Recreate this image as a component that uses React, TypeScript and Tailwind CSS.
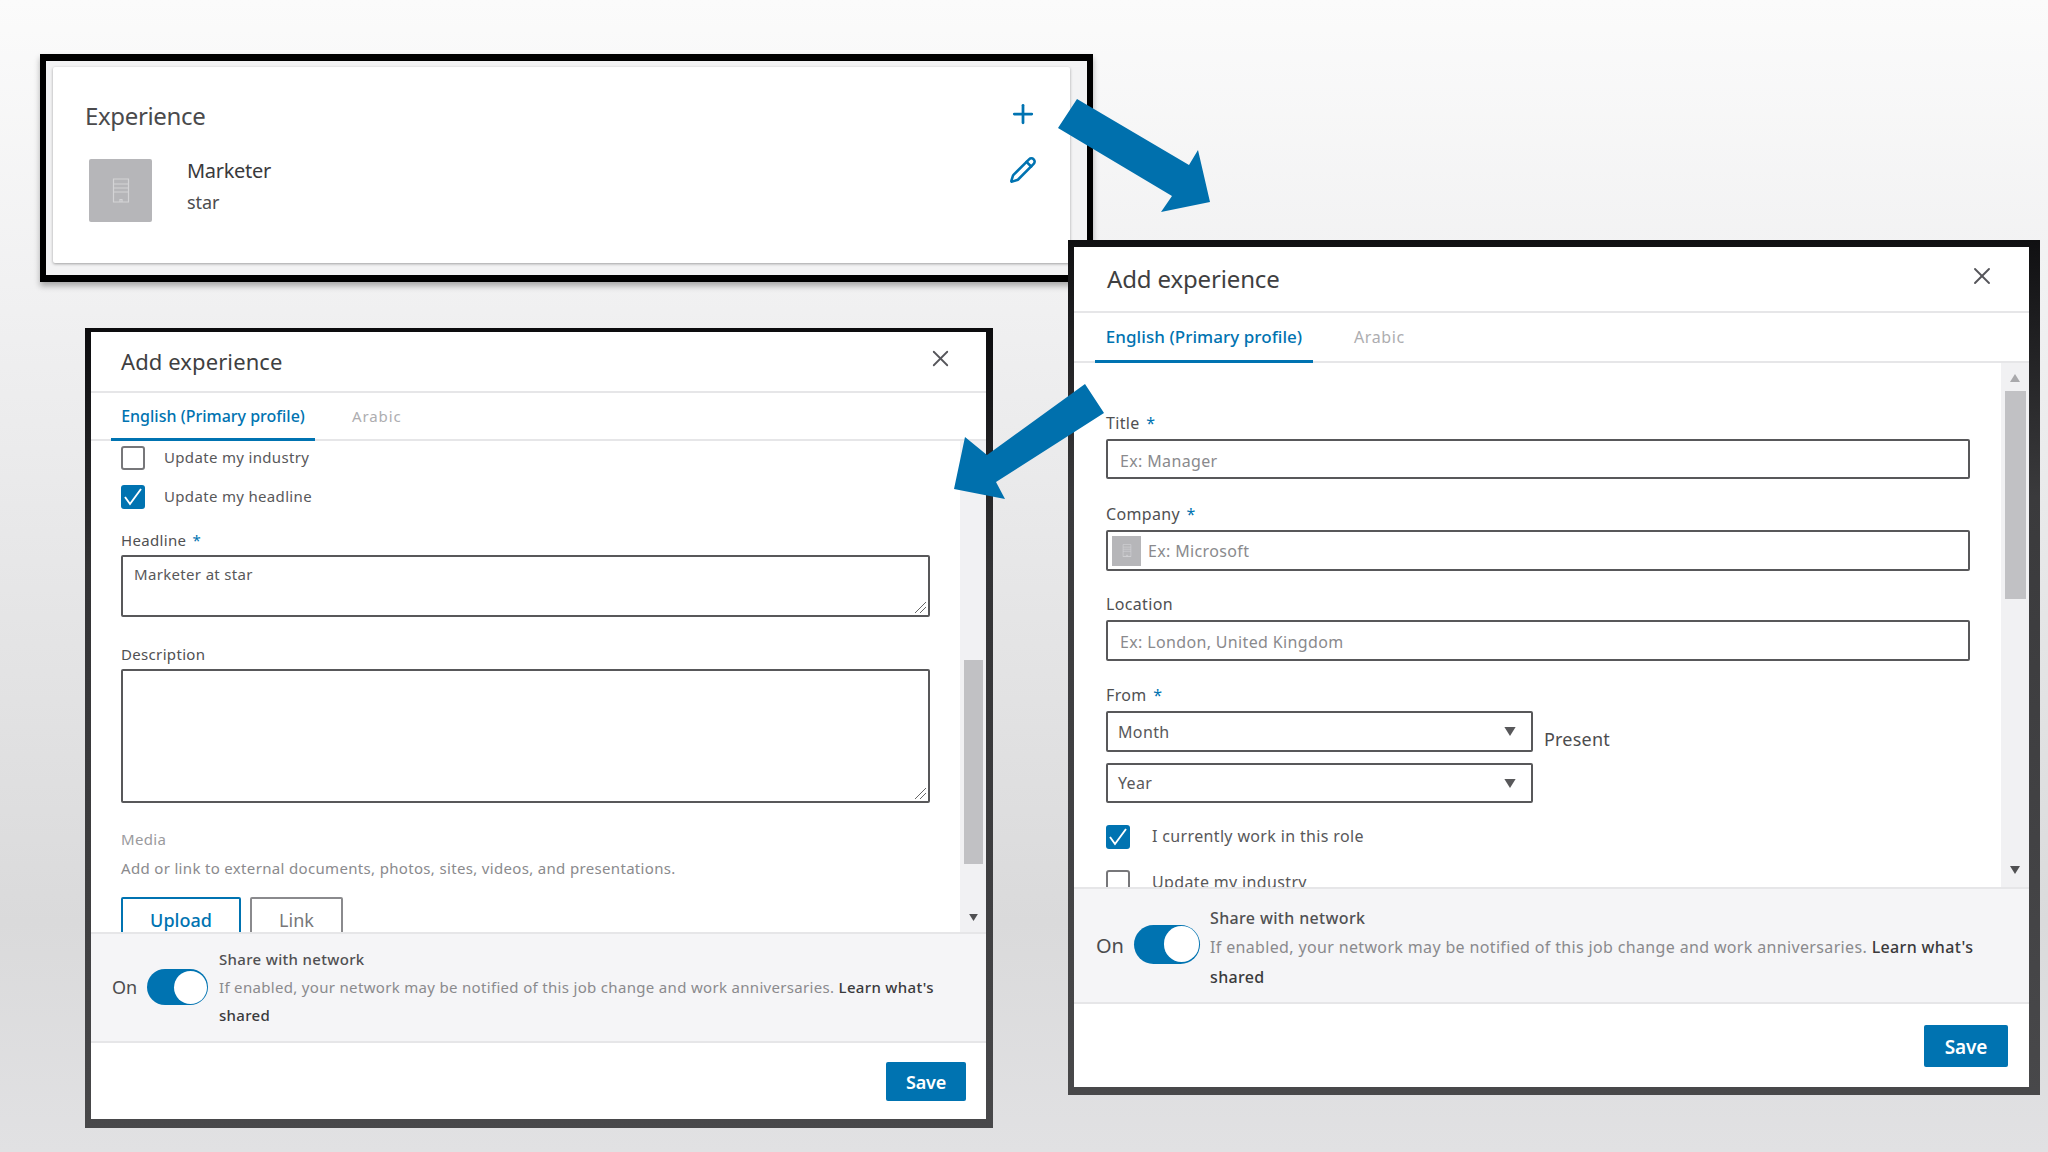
import React from "react";
import { X, Plus, Pencil } from "lucide-react";

function Building({ className }: { className: string }) {
  return (
    <svg viewBox="0 0 18 25" className={className} fill="none" stroke="#d4d4d6" strokeWidth="1.2">
      <path d="M1.5 24V1h15v23H1.5zM1.5 6h15M1.5 10h15M1.5 14h15M1 24h16M8 24v-2.5h2V24" />
    </svg>
  );
}

function Check() {
  return (
    <div className="w-[24px] h-[24px] rounded-[3px] bg-[#0073b1] flex items-center justify-center shrink-0">
      <svg viewBox="0 0 24 24" className="w-[24px] h-[24px]" fill="none" stroke="#fff" strokeWidth="1.9">
        <path d="M4 12l5 7L20 4" />
      </svg>
    </div>
  );
}

function Empty() {
  return <div className="w-[24px] h-[24px] rounded-[3px] border-2 border-[#77777a] bg-white shrink-0" />;
}

function Tri({ up, className }: { up?: boolean; className: string }) {
  return (
    <svg viewBox="0 0 10 8" className={className} fill="currentColor">
      <path d={up ? "M5 0l5 8H0z" : "M0 0h10L5 8z"} />
    </svg>
  );
}

function Grip() {
  return (
    <svg viewBox="0 0 14 14" className="absolute right-[1px] bottom-[1px] w-[14px] h-[14px]" fill="none" stroke="#666" strokeWidth="1">
      <path d="M13 2L2 13M13 7l-6 6" />
    </svg>
  );
}

function Toggle({ className }: { className: string }) {
  return (
    <div className={"rounded-full bg-[#0073b1] flex items-center justify-end p-[1.5px] shrink-0 " + className}>
      <div className="h-full aspect-[35/36] rounded-full bg-white" />
    </div>
  );
}

export default function App() {
  return (
    <div className="relative w-[2048px] h-[1152px] overflow-hidden bg-[linear-gradient(180deg,#fbfbfb_0%,#f0f0f1_27%,#dadadb_80%,#e1e1e3_100%)] font-['Noto_Sans',sans-serif] text-[#3d3d3f]">
      {/* Top window */}
      <div className="absolute left-[40px] top-[54px] w-[1053px] h-[228px] border-[6px] border-t-[7px] border-b-[7px] border-black bg-[#f3f3f4] pl-[7px] pr-[17px] pt-[6px] shadow-[0_4px_6px_rgba(0,0,0,0.3)]">
        <div className="h-[196px] bg-white rounded-[2px] shadow-[0_1px_3px_rgba(0,0,0,0.35)] pl-[32px] pr-[32px] pt-[32px] relative">
          <div className="flex items-center justify-between h-[34px]">
            <span className="text-[24px] leading-[34px] tracking-[-0.35px] text-[#4a4a4c]">Experience</span>
            <Plus className="w-[30px] h-[30px] text-[#0073b1] -mt-[4px]" strokeWidth={2.2} />
          </div>
          <div className="flex mt-[26px] ml-[4px]">
            <div className="w-[63px] h-[63px] bg-[#b6b6b9] rounded-[2px] flex items-center justify-center">
              <Building className="w-[18px] h-[25px]" />
            </div>
            <div className="ml-[35px] -mt-[1px]">
              <div className="text-[20px] leading-[26px] tracking-[-0.3px] text-[#3a3a3c]">Marketer</div>
              <div className="text-[18px] leading-[26px] mt-[5px] tracking-[-0.1px] text-[#4c4c4e]">star</div>
            </div>
            <Pencil className="ml-auto w-[28px] h-[28px] text-[#0073b1] -mt-[3px] mr-[1px]" strokeWidth={2.2} />
          </div>
        </div>
      </div>

      {/* Right modal */}
      <div className="absolute left-[1068px] top-[240px] w-[972px] h-[855px] pl-[6px] pr-[11px] pt-[7px] pb-[8px] bg-[linear-gradient(180deg,#101012_0%,#3a3a3c_30%,#48484a_100%)]">
        <div className="h-full bg-white flex flex-col">
          <div className="h-[66px] shrink-0 flex items-center justify-between pl-[33px] pr-[33px] border-b-2 border-[#e6e6e8]">
            <span className="text-[24px] tracking-[-0.15px] text-[#3f3f41]">Add experience</span>
            <X className="w-[28px] h-[28px] text-[#55555a] -mt-[6px]" strokeWidth={1.6} />
          </div>
          <div className="h-[50px] shrink-0 flex pl-[21px] border-b-2 border-[#e6e6e8]">
            <div className="w-[218px] -mb-[2px] border-b-[3px] border-[#0073b1] flex items-center justify-center text-[17px] font-medium tracking-[0.05px] text-[#0073b1]">English (Primary profile)</div>
            <div className="ml-[41px] flex items-center text-[16px] tracking-[0.6px] text-[#adadb0]">Arabic</div>
          </div>
          <div className="h-[524px] shrink-0 flex overflow-hidden">
            <div className="flex-1 min-w-0 pl-[32px] pt-[50px] text-[16px] tracking-[0.35px] overflow-hidden">
              <div className="h-[20px] leading-[20px] text-[#505052]">Title <span className="ml-[2px] text-[#0073b1]">*</span></div>
              <div className="mt-[6px] w-[864px] h-[40px] border-2 border-[#58585a] rounded-[2px] flex items-center pl-[12px] pt-[3px] text-[#8a8a8d]">Ex: Manager</div>
              <div className="mt-[25px] h-[20px] leading-[20px] text-[#505052]">Company <span className="ml-[2px] text-[#0073b1]">*</span></div>
              <div className="mt-[6px] w-[864px] h-[41px] border-2 border-[#58585a] rounded-[2px] flex items-center pl-[4px] text-[#8a8a8d]">
                <div className="w-[29px] h-[30px] bg-[#b6b6b9] flex items-center justify-center"><Building className="w-[10px] h-[13px]" /></div>
                <span className="ml-[7px]">Ex: Microsoft</span>
              </div>
              <div className="mt-[23px] h-[20px] leading-[20px] text-[#505052]">Location</div>
              <div className="mt-[6px] w-[864px] h-[41px] border-2 border-[#58585a] rounded-[2px] flex items-center pl-[12px] pt-[2px] text-[#8a8a8d]">Ex: London, United Kingdom</div>
              <div className="mt-[24px] h-[20px] leading-[20px] text-[#505052]">From <span className="ml-[2px] text-[#0073b1]">*</span></div>
              <div className="flex mt-[6px]">
                <div className="w-[427px]">
                  <div className="h-[41px] border-2 border-[#58585a] rounded-[2px] flex items-center justify-between pl-[10px] pr-[14px] text-[#58585a]">Month<Tri className="w-[14px] h-[9px] text-[#58585a]" /></div>
                  <div className="mt-[11px] h-[40px] border-2 border-[#58585a] rounded-[2px] flex items-center justify-between pl-[10px] pr-[14px] text-[#58585a]">Year<Tri className="w-[14px] h-[9px] text-[#58585a]" /></div>
                </div>
                <div className="ml-[11px] mt-[17px] text-[18px] leading-[22px] tracking-[0.2px] text-[#4c4c4e]">Present</div>
              </div>
              <div className="mt-[22px] flex items-center gap-[22px] text-[#58585a]"><Check /><span className="-mt-[2px]">I currently work in this role</span></div>
              <div className="mt-[20px] flex items-center gap-[22px] text-[#58585a]"><Empty /><span className="mt-[1px]">Update my industry</span></div>
            </div>
            <div className="w-[28px] shrink-0 bg-[#f1f1f3] flex flex-col items-center relative">
              <Tri up className="w-[12px] h-[8px] text-[#a9a9ac] mt-[11px]" />
              <div className="w-[21px] h-[208px] bg-[#c1c1c4] mt-[9px]" />
              <Tri className="w-[12px] h-[8px] text-[#505052] mt-auto mb-[13px]" />
            </div>
          </div>
          <div className="h-[117px] shrink-0 border-t-2 border-b-2 border-[#e6e6e8] bg-[#f5f5f7] flex items-center pl-[22px] pr-[16px]">
            <span className="text-[20px] text-[#4c4c4e] w-[37px] shrink-0">On</span>
            <Toggle className="w-[66px] h-[39px] mb-[3px] ml-[1px]" />
            <div className="ml-[10px] text-[16px] leading-[29.5px] tracking-[0.35px] text-[#8a8a8d] mt-[5px]">
              <div className="font-medium text-[#505052]">Share with network</div>
              <div>If enabled, your network may be notified of this job change and work anniversaries. <span className="font-medium text-[#3a3a3c]">Learn what's shared</span></div>
            </div>
          </div>
          <div className="flex-1 flex justify-end items-start pt-[21px] pr-[21px]">
            <div className="w-[84px] h-[42px] bg-[#0073b1] rounded-[2px] text-white text-[19px] font-semibold tracking-[-0.2px] flex items-center justify-center pt-[2px]">Save</div>
          </div>
        </div>
      </div>

      {/* Left modal */}
      <div className="absolute left-[85px] top-[328px] w-[908px] h-[800px] pl-[6px] pr-[7px] pt-[4px] pb-[9px] bg-[linear-gradient(180deg,#0c0c0e_0%,#333335_30%,#48484a_100%)]">
        <div className="h-full bg-white flex flex-col">
          <div className="h-[61px] shrink-0 flex items-center justify-between pl-[30px] pr-[32px] border-b-2 border-[#e6e6e8]">
            <span className="text-[22px] tracking-[0.1px] text-[#3f3f41]">Add experience</span>
            <X className="w-[27px] h-[27px] text-[#55555a] -mt-[7px]" strokeWidth={1.6} />
          </div>
          <div className="h-[48px] shrink-0 flex pl-[20px] border-b-2 border-[#e6e6e8]">
            <div className="w-[204px] -mb-[2px] border-b-[3px] border-[#0073b1] flex items-center justify-center text-[16px] font-medium tracking-[0px] text-[#0073b1]">English (Primary profile)</div>
            <div className="ml-[37px] flex items-center text-[15px] tracking-[0.9px] text-[#adadb0]">Arabic</div>
          </div>
          <div className="h-[491px] shrink-0 flex overflow-hidden">
            <div className="flex-1 min-w-0 pl-[30px] pt-[5px] text-[15px] tracking-[0.33px] overflow-hidden">
              <div className="flex items-center gap-[19px] text-[#58585a]"><Empty /><span className="-mt-[1px]">Update my industry</span></div>
              <div className="mt-[15px] flex items-center gap-[19px] text-[#58585a]"><Check /><span className="-mt-[1px]">Update my headline</span></div>
              <div className="mt-[21px] h-[20px] leading-[20px] text-[#505052]">Headline <span className="ml-[2px] text-[#0073b1]">*</span></div>
              <div className="relative mt-[5px] w-[809px] h-[62px] border-2 border-[#58585a] rounded-[2px] pl-[11px] pt-[6px] leading-[22px] text-[#58585a]">Marketer at star<Grip /></div>
              <div className="mt-[27px] h-[20px] leading-[20px] text-[#505052]">Description</div>
              <div className="relative mt-[5px] w-[809px] h-[134px] border-2 border-[#58585a] rounded-[2px]"><Grip /></div>
              <div className="mt-[26px] h-[20px] leading-[20px] text-[#9a9a9d]">Media</div>
              <div className="mt-[9px] h-[20px] leading-[20px] text-[#8a8a8d]">Add or link to external documents, photos, sites, videos, and presentations.</div>
              <div className="mt-[19px] flex gap-[9px]">
                <div className="w-[120px] h-[50px] border-2 border-[#0073b1] rounded-[2px] text-[#0073b1] text-[18px] tracking-normal font-medium flex justify-center pt-[8px]">Upload</div>
                <div className="w-[93px] h-[50px] border-2 border-[#8a8a8d] rounded-[2px] text-[#77777a] text-[18px] tracking-normal flex justify-center pt-[8px]">Link</div>
              </div>
            </div>
            <div className="w-[26px] shrink-0 bg-[#f1f1f3] flex flex-col items-center">
              <div className="w-[19px] h-[204px] bg-[#c1c1c4] mt-[219px]" />
              <Tri className="w-[11px] h-[7px] text-[#505052] mt-auto mb-[11px]" />
            </div>
          </div>
          <div className="h-[111px] shrink-0 border-t-2 border-b-2 border-[#e6e6e8] bg-[#f5f5f7] flex items-center pl-[21px] pr-[18px]">
            <span className="text-[18px] text-[#4c4c4e] w-[35px] shrink-0">On</span>
            <Toggle className="w-[61px] h-[36px] mb-[1px]" />
            <div className="ml-[11px] text-[15px] leading-[28px] tracking-[0.32px] text-[#8a8a8d] mb-[1px]">
              <div className="font-medium text-[#505052]">Share with network</div>
              <div>If enabled, your network may be notified of this job change and work anniversaries. <span className="font-medium text-[#3a3a3c]">Learn what's shared</span></div>
            </div>
          </div>
          <div className="flex-1 flex justify-end items-start pt-[19px] pr-[20px]">
            <div className="w-[80px] h-[39px] bg-[#0073b1] rounded-[2px] text-white text-[18px] font-semibold tracking-[-0.2px] flex items-center justify-center pt-[2px]">Save</div>
          </div>
        </div>
      </div>

      {/* Arrows */}
      <svg className="absolute inset-0 w-[2048px] h-[1152px] pointer-events-none" viewBox="0 0 2048 1152" fill="#0070ad">
        <path d="M1077 99L1189 165L1198 150L1210 202L1161 212L1172 196L1058 128Z" />
        <path d="M1085 384L1104 413L996 482L1005 499L954 489L965 437L987 455Z" />
      </svg>
    </div>
  );
}
